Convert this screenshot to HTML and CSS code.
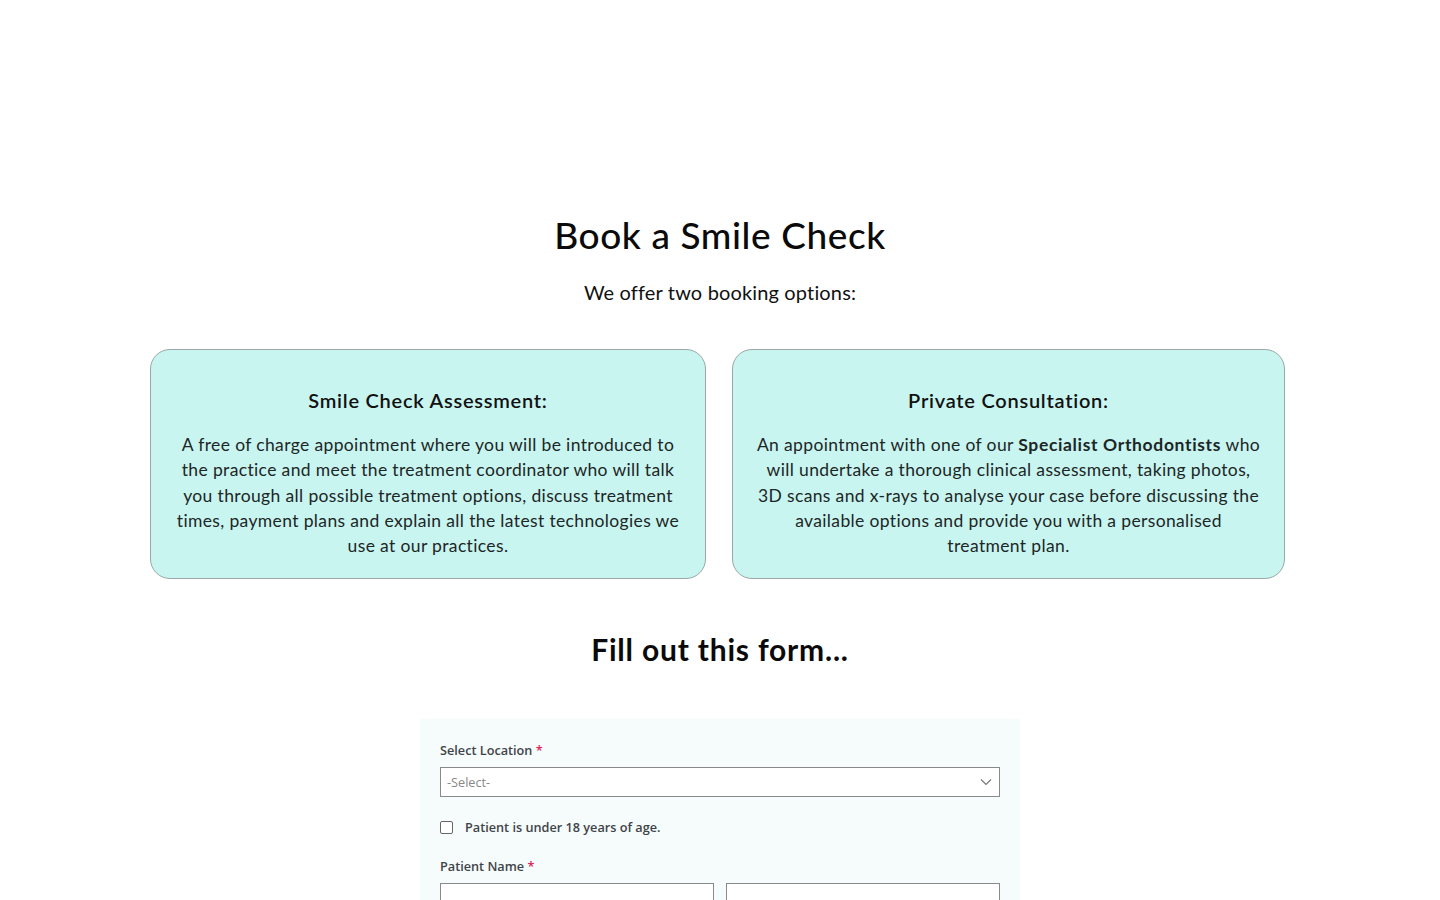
FILE: index.html
```html
<!DOCTYPE html>
<html lang="en">
<head>
<meta charset="utf-8">
<title>Book a Smile Check</title>
<link rel="stylesheet" href="styles.css">
</head>
<body>
<main class="page">
  <section class="intro">
    <h1 class="title">Book a Smile Check</h1>
    <p class="subtitle">We offer two booking options:</p>
  </section>
  <section class="cards">
    <div class="card">
      <h3 class="card-title">Smile Check Assessment:</h3>
      <p class="card-text">A free of charge appointment where you will be introduced to the practice and meet the treatment coordinator who will talk you through all possible treatment options, discuss treatment times, payment plans and explain all the latest technologies we use at our practices.</p>
    </div>
    <div class="card">
      <h3 class="card-title">Private Consultation:</h3>
      <p class="card-text">An appointment with one of our <strong>Specialist Orthodontists</strong> who will undertake a thorough clinical assessment, taking photos, 3D scans and x-rays to analyse your case before discussing the available options and provide you with a personalised treatment plan.</p>
    </div>
  </section>
  <h2 class="form-heading">Fill out this form...</h2>
  <form class="form">
    <div class="field">
      <label class="label">Select Location <span class="req">*</span></label>
      <div class="select">
        <span class="select-text">-Select-</span>
        <svg class="chev" width="12" height="8" viewBox="0 0 12 8"><path d="M1 1.5 L6 6.5 L11 1.5" fill="none" stroke="#777" stroke-width="1.2"/></svg>
      </div>
    </div>
    <div class="check-row">
      <span class="checkbox"></span>
      <span class="check-label">Patient is under 18 years of age.</span>
    </div>
    <div class="field">
      <label class="label">Patient Name <span class="req">*</span></label>
      <div class="name-row">
        <div class="input"></div>
        <div class="input"></div>
      </div>
    </div>
  </form>
</main>
</body>
</html>
```
FILE: styles.css
```css
* { box-sizing: border-box; }
html, body { margin: 0; padding: 0; background: #fff; }
body { font-family: "Lato", "Noto Sans", sans-serif; color: #111; }
.page { display: flex; flex-direction: column; align-items: center; padding-top: 212px; }
.intro { text-align: center; }
.title { margin: 0; font-size: 37px; font-weight: 500; line-height: 46px; color: #0a0a0a; letter-spacing: 0.6px; }
.subtitle { margin: 21px 0 0; font-size: 20px; line-height: 26px; font-weight: 400; color: #111; letter-spacing: 0.15px; }
.cards { display: grid; grid-template-columns: 556px 553px; gap: 26px; margin-top: 44px; margin-right: 5px; }
.card { background: #c9f5f0; border: 1px solid #9aa8a6; border-radius: 20px; padding: 37px 22px 20px; text-align: center; }
.card-title { margin: 0; font-size: 20px; line-height: 26px; font-weight: 600; color: #111; letter-spacing: 0.75px; }
.card-text { margin: 19px 0 0; font-size: 17.5px; line-height: 25.3px; color: #1c2626; letter-spacing: 0.36px; }
.card-text strong { font-weight: 700; letter-spacing: 0.65px; }
.form-heading { margin: 51px 0 0; font-size: 30px; line-height: 38px; font-weight: 700; color: #0a0a0a; letter-spacing: 0.8px; }
.form { width: 600px; margin-top: 51px; background: #f6fbfc; padding: 22px 20px 0; font-family: "Open Sans", sans-serif; }
.field { display: flex; flex-direction: column; }
.label { font-size: 12.7px; font-weight: 600; color: #3e4448; line-height: 18px; margin-bottom: 8px; }
.req { color: #d62a5a; }
.select { height: 30px; border: 1px solid #8a8a8a; background: #fff; display: flex; align-items: center; justify-content: space-between; padding: 0 7px 0 6px; }
.select-text { font-size: 12.7px; color: #888; }
.check-row { display: flex; align-items: center; gap: 12px; margin: 21px 0 21px; }
.checkbox { width: 13px; height: 13px; border: 1px solid #666; border-radius: 2px; background: #fff; }
.check-label { font-size: 12.7px; font-weight: 600; color: #3e4448; }
.name-row { display: grid; grid-template-columns: 1fr 1fr; gap: 12px; }
.input { height: 30px; border: 1px solid #8a8a8a; background: #fff; }
```
